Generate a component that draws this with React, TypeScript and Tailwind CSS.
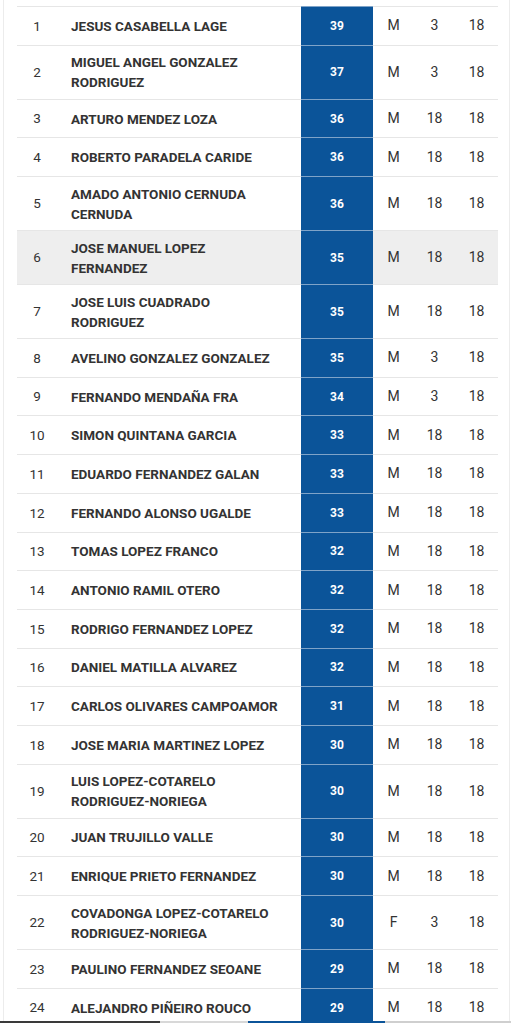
import React from "react";

type Row = [number, string, number, string, number, number];

const rows: Row[] = [
  [1, "JESUS CASABELLA LAGE", 39, "M", 3, 18],
  [2, "MIGUEL ANGEL GONZALEZ RODRIGUEZ", 37, "M", 3, 18],
  [3, "ARTURO MENDEZ LOZA", 36, "M", 18, 18],
  [4, "ROBERTO PARADELA CARIDE", 36, "M", 18, 18],
  [5, "AMADO ANTONIO CERNUDA CERNUDA", 36, "M", 18, 18],
  [6, "JOSE MANUEL LOPEZ FERNANDEZ", 35, "M", 18, 18],
  [7, "JOSE LUIS CUADRADO RODRIGUEZ", 35, "M", 18, 18],
  [8, "AVELINO GONZALEZ GONZALEZ", 35, "M", 3, 18],
  [9, "FERNANDO MENDAÑA FRA", 34, "M", 3, 18],
  [10, "SIMON QUINTANA GARCIA", 33, "M", 18, 18],
  [11, "EDUARDO FERNANDEZ GALAN", 33, "M", 18, 18],
  [12, "FERNANDO ALONSO UGALDE", 33, "M", 18, 18],
  [13, "TOMAS LOPEZ FRANCO", 32, "M", 18, 18],
  [14, "ANTONIO RAMIL OTERO", 32, "M", 18, 18],
  [15, "RODRIGO FERNANDEZ LOPEZ", 32, "M", 18, 18],
  [16, "DANIEL MATILLA ALVAREZ", 32, "M", 18, 18],
  [17, "CARLOS OLIVARES CAMPOAMOR", 31, "M", 18, 18],
  [18, "JOSE MARIA MARTINEZ LOPEZ", 30, "M", 18, 18],
  [19, "LUIS LOPEZ-COTARELO RODRIGUEZ-NORIEGA", 30, "M", 18, 18],
  [20, "JUAN TRUJILLO VALLE", 30, "M", 18, 18],
  [21, "ENRIQUE PRIETO FERNANDEZ", 30, "M", 18, 18],
  [22, "COVADONGA LOPEZ-COTARELO RODRIGUEZ-NORIEGA", 30, "F", 3, 18],
  [23, "PAULINO FERNANDEZ SEOANE", 29, "M", 18, 18],
  [24, "ALEJANDRO PIÑEIRO ROUCO", 29, "M", 18, 18],
  [25, "MANUEL GARCIA GARCIA", 29, "M", 18, 18],
];

export default function App() {
  return (
    <div className="min-h-screen bg-white pl-[3px] pr-[1px] font-['Roboto',sans-serif] text-[#333]">
      <div className="border-l border-r border-[#ececec] pl-[13px] pr-[11px] pt-[6px]">
        <div className="flex flex-col">
          {rows.map(([rank, name, score, sex, a, b]) => (
            <div
              key={rank}
              className={`flex min-h-[38.7px] items-stretch border-t border-[#e6e6e6] ${
                rank === 6 ? "bg-[#eeeeee]" : "bg-white"
              }`}
            >
              <div className="flex w-[40px] items-center justify-center text-[13.5px]">{rank}</div>
              <div className="flex w-[244px] items-center pl-[14px] pr-[16px] pt-[6.5px] pb-[6.5px] text-[13.5px] font-bold leading-[20px]">
                {name}
              </div>
              <div className="-mt-px flex w-[72px] items-center justify-center border-t border-[#7fa3c8] bg-[#0b5499] text-[12px] font-bold text-white">
                {score}
              </div>
              <div className="flex w-[41px] items-center justify-center text-[14px]">{sex}</div>
              <div className="flex w-[41px] items-center justify-center text-[14px]">{a}</div>
              <div className="flex flex-1 items-center justify-center text-[14px]">{b}</div>
            </div>
          ))}
        </div>
      </div>
      <div className="pointer-events-none fixed bottom-0 left-0 flex h-[2px] w-full">
        <div className="w-[160px] bg-[#3a3a3a]" />
        <div className="w-[88px] bg-[#d8d8d8]" />
        <div className="w-[137px] bg-[#0b5499]" />
        <div className="flex-1 bg-[#cfcfcf]" />
      </div>
    </div>
  );
}
